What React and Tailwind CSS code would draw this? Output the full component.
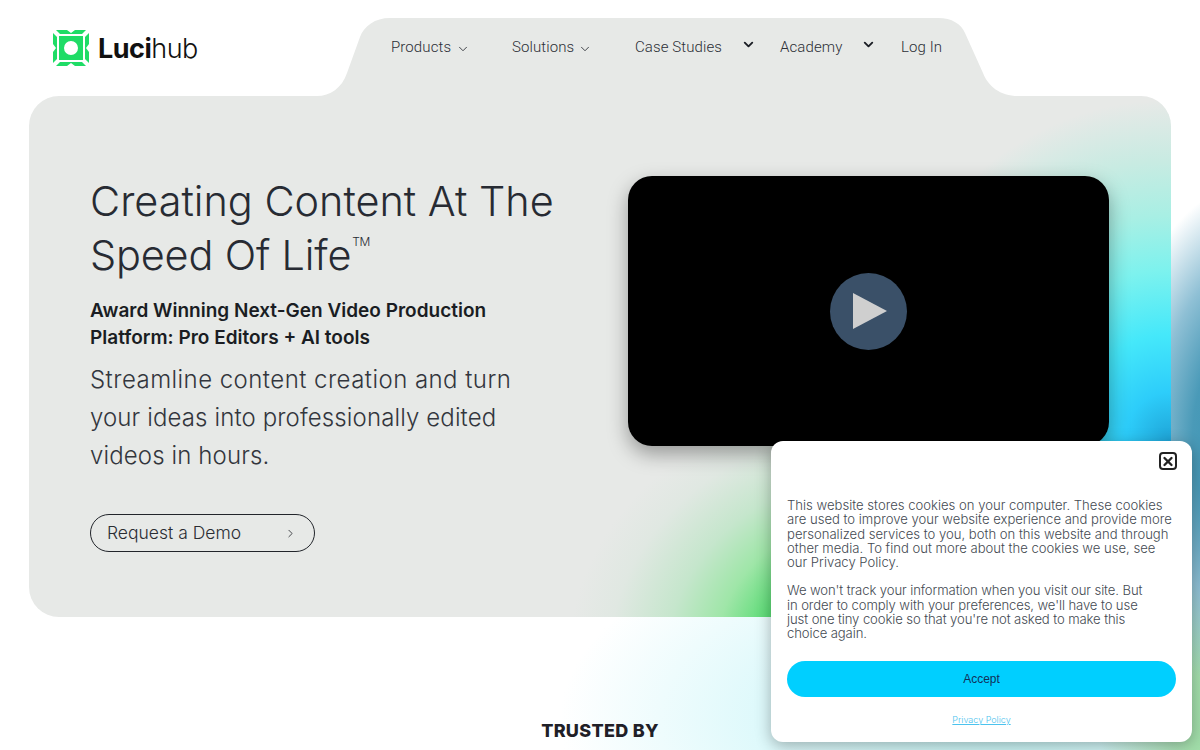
import React from "react";
import { ChevronDown, ChevronRight, X } from "lucide-react";

function Logo() {
  return (
    <div className="flex w-[145px] items-center gap-[9px]">
      <svg width="36" height="36" viewBox="0 0 36 36" className="block shrink-0">
        <path fill="#1fdc66" d="M3 0h11l4 3 4-3h11l-4 4H7z" />
        <path fill="#1fdc66" d="M3 36h11l4-3 4 3h11l-4-4H7z" />
        <path fill="#1fdc66" d="M0 3v11l3 4-3 4v11l4-4V7z" />
        <path fill="#1fdc66" d="M36 3v11l-3 4 3 4v11l-4-4V7z" />
        <path fill="#1fdc66" fillRule="evenodd" d="M6 6h24v24H6zM18 11a7 7 0 1 0 0 14 7 7 0 0 0 0-14z" />
      </svg>
      <span className="font-['Inter',sans-serif] text-[27px] leading-none tracking-[-0.5px] text-[#111]">
        <span className="font-bold">Luci</span>
        <span className="font-light">hub</span>
      </span>
    </div>
  );
}

function NavItem({ label, className, chevron }) {
  return (
    <a className={"flex items-center font-['Roboto',sans-serif] font-light text-[15px] leading-[18px] tracking-[0.1px] text-[#2c2f36] " + (className || "")}>
      {label}
      {chevron}
    </a>
  );
}

function Nav() {
  return (
    <div className="relative ml-[162px] mt-[18px] h-[78px] w-[620px]">
      <svg className="absolute left-[-50px] top-0" width="720" height="78" viewBox="0 0 720 78">
        <path fill="#e7e9e7" d="M7 78C20 78 32 70 37 55L50 19C54 8 65 0 80 0H628C642 0 651 6 655 15L673 55C678 68 690 78 708 78Z" />
      </svg>
      <nav className="relative flex items-start pt-[20px] pl-[31px]">
        <NavItem label="Products" className="w-[121px]" chevron={<ChevronDown className="ml-[5px] mt-[4px] text-[#2c2f36]" size={14} strokeWidth={1.5} />} />
        <NavItem label="Solutions" className="w-[123px]" chevron={<ChevronDown className="ml-[4px] mt-[4px] text-[#2c2f36]" size={14} strokeWidth={1.5} />} />
        <NavItem label="Case Studies" className="w-[145px]" chevron={<ChevronDown className="ml-[19px] -mt-[5px] text-[#1c1f26]" size={15} strokeWidth={3} />} />
        <NavItem label="Academy" className="w-[121px]" chevron={<ChevronDown className="ml-[19px] -mt-[5px] text-[#1c1f26]" size={15} strokeWidth={3} />} />
        <NavItem label="Log In" />
      </nav>
    </div>
  );
}

function Hero() {
  return (
    <section className="relative mx-[29px] h-[521px] w-[1142px] overflow-hidden rounded-[30px] bg-[#e7e9e7]">
      <div className="absolute inset-0 bg-[radial-gradient(ellipse_310px_340px_at_1140px_344px,#1fa5d8_0%,#2dcdfa_14%,#45e8fa_31%,#7df2ee_50%,#a8efe4_66%,#c8ebe2_82%,rgba(231,233,231,0)_100%),radial-gradient(ellipse_340px_270px_at_880px_560px,#5cdc76_0%,#5cdc76_44%,#9fe6a8_57%,#c5e6cc_71%,#e0e8e2_88%,rgba(231,233,231,0)_100%)]" />
      <div className="relative flex pl-[61px] pt-[80px]">
        <div className="-mt-[2px] w-[538px] shrink-0">
          <h1 className="font-['Inter',sans-serif] font-light text-[41.4px] leading-[54px] text-[#272b33]">
            Creating Content At The<br />
            <span className="tracking-[-0.15px]">Speed Of Life</span><sup className="ml-[1px] align-[18px] text-[12px] leading-none tracking-[-0.5px]">TM</sup>
          </h1>
          <p className="mt-[15px] font-['Inter',sans-serif] font-semibold text-[19px] leading-[27px] text-[#1a1d23]">
            Award Winning Next-Gen Video Production<br />Platform: Pro Editors + AI tools
          </p>
          <p className="mt-[10px] font-['Inter',sans-serif] font-light text-[24px] leading-[38px] tracking-[0.12px] text-[#33363d]">
            <span className="tracking-[0.45px]">Streamline content creation and turn</span><br />your ideas into professionally edited<br />videos in hours.
          </p>
          <a className="mt-[39px] flex h-[38px] w-[225px] items-center justify-between rounded-full border border-[#22252b] pl-4 pr-[17px] font-['Inter',sans-serif] font-light text-[17.5px] text-[#2a2d33]">
            Request a Demo
            <ChevronRight size={13} strokeWidth={1.5} className="text-[#22252b]" />
          </a>
        </div>
        <div className="flex h-[270px] w-[481px] shrink-0 items-center justify-center rounded-[24px] bg-black shadow-[0_8px_20px_rgba(0,0,0,0.35)]">
          <div className="flex h-[77px] w-[77px] items-center justify-center rounded-full bg-[#3a5068]">
            <svg width="34" height="36" viewBox="0 0 34 36" className="ml-[3px]">
              <path fill="#cfcfcf" d="M0 0L34 18L0 36Z" />
            </svg>
          </div>
        </div>
      </div>
    </section>
  );
}

function Cookie() {
  return (
    <aside className="absolute left-[771px] top-[441px] h-[301px] w-[421px] rounded-[12px] bg-white pl-4 pr-[15px] shadow-[0_4px_16px_rgba(0,0,0,0.3)]">
      <div className="flex justify-end pt-[11px]">
        <div className="flex h-[18px] w-[18px] items-center justify-center rounded-[4px] border-2 border-[#222]">
          <X size={15} strokeWidth={4} className="text-[#222]" />
        </div>
      </div>
      <div className="mt-[28px] font-['Inter',sans-serif] font-light text-[13.1px] leading-[14.3px] text-[#444a52]">
        <p>This website stores cookies on your computer. These cookies<br />are used to improve your website experience and provide more<br />personalized services to you, both on this website and through<br />other media. To find out more about the cookies we use, see<br />our Privacy Policy.</p>
        <p className="mt-[14px] tracking-[-0.1px]">We won't track your information when you visit our site. But<br />in order to comply with your preferences, we'll have to use<br />just one tiny cookie so that you're not asked to make this<br />choice again.</p>
      </div>
      <button className="mt-[20px] flex h-[36px] w-[389px] items-center justify-center rounded-full bg-[#00cfff] font-['Liberation_Sans',sans-serif] text-[12px] text-[#12305a]">Accept</button>
      <div className="mt-[16px] flex w-[389px] justify-center">
        <a className="font-['Inter',sans-serif] font-light text-[9px] underline text-[#4cc3ee]">Privacy Policy</a>
      </div>
    </aside>
  );
}

export default function App() {
  return (
    <div className="relative h-[750px] w-[1200px] overflow-hidden bg-white">
      <div className="absolute inset-0 bg-[radial-gradient(ellipse_150px_260px_at_1260px_440px,#2a8fb0_0%,#4a9ab8_45%,#8fc0d5_70%,rgba(255,255,255,0)_100%),radial-gradient(ellipse_180px_340px_at_1280px_740px,#7fd08a_0%,#a5e0ad_50%,rgba(255,255,255,0)_100%),radial-gradient(ellipse_440px_210px_at_1000px_720px,#c8f7f7_0%,#def9fb_55%,rgba(255,255,255,0)_100%)]" />
      <div className="relative">
        <header className="flex h-[96px] items-start">
          <div className="ml-[53px] mt-[30px]"><Logo /></div>
          <Nav />
        </header>
        <Hero />
        <h2 className="mt-[104px] text-center font-['Inter',sans-serif] font-extrabold text-[18px] tracking-[0.3px] leading-[20px] text-[#1f2027]">TRUSTED BY</h2>
      </div>
      <Cookie />
    </div>
  );
}
